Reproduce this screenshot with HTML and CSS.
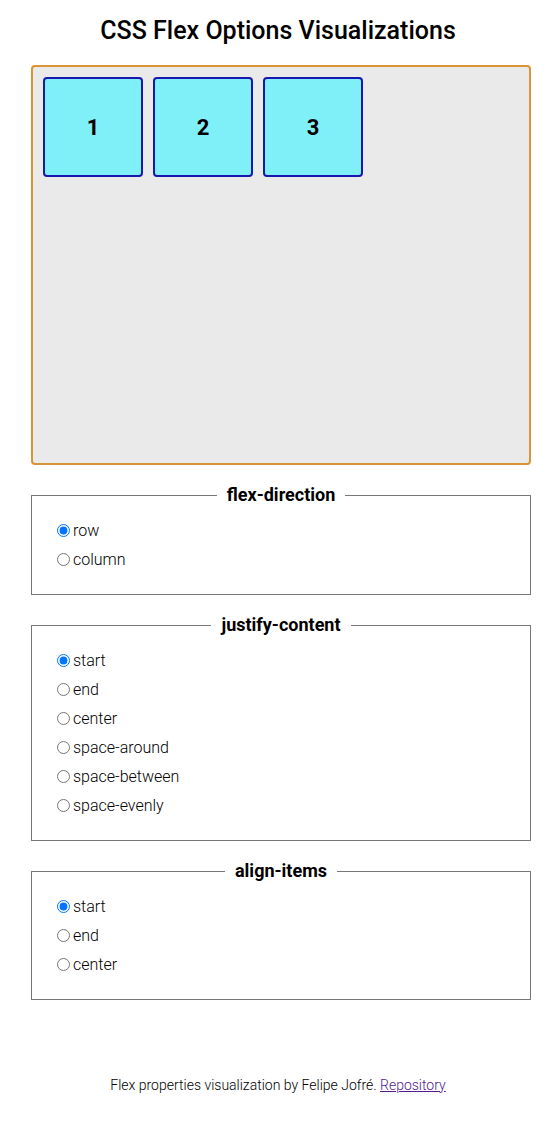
FILE: index.html
```html
<!DOCTYPE html>
<html lang="en">
<head>
    <meta charset="UTF-8">
    <meta name="viewport" content="width=device-width, initial-scale=1.0">
    <title>CSS Flex Options Visualizations</title>
    <link rel="stylesheet" href="styles.css">
</head>
<body>
    <h1>CSS Flex Options Visualizations</h1>

    <div class="flex-container">
        <div class="flex-item">1</div>
        <div class="flex-item">2</div>
        <div class="flex-item">3</div>
    </div>

    <fieldset>
        <legend>flex-direction</legend>
        <label class="option"><input type="radio" name="flex-direction" value="row" checked>row</label>
        <label class="option"><input type="radio" name="flex-direction" value="column">column</label>
    </fieldset>

    <fieldset>
        <legend>justify-content</legend>
        <label class="option"><input type="radio" name="justify-content" value="start" checked>start</label>
        <label class="option"><input type="radio" name="justify-content" value="end">end</label>
        <label class="option"><input type="radio" name="justify-content" value="center">center</label>
        <label class="option"><input type="radio" name="justify-content" value="space-around">space-around</label>
        <label class="option"><input type="radio" name="justify-content" value="space-between">space-between</label>
        <label class="option"><input type="radio" name="justify-content" value="space-evenly">space-evenly</label>
    </fieldset>

    <fieldset>
        <legend>align-items</legend>
        <label class="option"><input type="radio" name="align-items" value="start" checked>start</label>
        <label class="option"><input type="radio" name="align-items" value="end">end</label>
        <label class="option"><input type="radio" name="align-items" value="center">center</label>
    </fieldset>

    <footer>
        Flex properties visualization by Felipe Jofré. <a href="#" class="repo-link">Repository</a>
    </footer>
</body>
</html>
```

FILE: styles.css
```css
body {
    font-family: Roboto, "Liberation Sans", sans-serif;
    color: #000;
    background-color: #fff;
    margin: 0;
}

h1 {
    text-align: center;
    font-size: 25px;
    font-weight: 500;
    line-height: 28px;
    margin: 17px 0 20px;
}

.flex-container {
    display: flex;
    flex-direction: row;
    justify-content: flex-start;
    align-items: flex-start;
    gap: 10px;
    box-sizing: border-box;
    width: 500px;
    height: 400px;
    margin-left: 31px;
    padding: 10px;
    background-color: #eaeaea;
    border: 2px solid #d99535;
    border-radius: 4px;
}

.flex-item {
    display: flex;
    justify-content: center;
    align-items: center;
    box-sizing: border-box;
    width: 100px;
    height: 100px;
    background-color: #80f0f8;
    border: 2px solid #1818b0;
    border-radius: 4px;
    font-size: 22px;
    font-weight: 700;
}

fieldset {
    box-sizing: border-box;
    width: 500px;
    margin: 20px 0 0 31px;
    padding: 11px 20px 20px;
    border: 1px solid #777;
}

legend {
    margin: 0 auto;
    padding: 0 10px;
    font-size: 18px;
    font-weight: 700;
    line-height: 20px;
}

.option {
    display: block;
    height: 29px;
    line-height: 29px;
    font-size: 16px;
    font-weight: 300;
}

.option input {
    margin: 0 3px 0 5px;
    vertical-align: -1px;
}

footer {
    margin-top: 77px;
    text-align: center;
    font-size: 14px;
    font-weight: 300;
    line-height: 16px;
}

.repo-link {
    color: #551a8b;
}
```
